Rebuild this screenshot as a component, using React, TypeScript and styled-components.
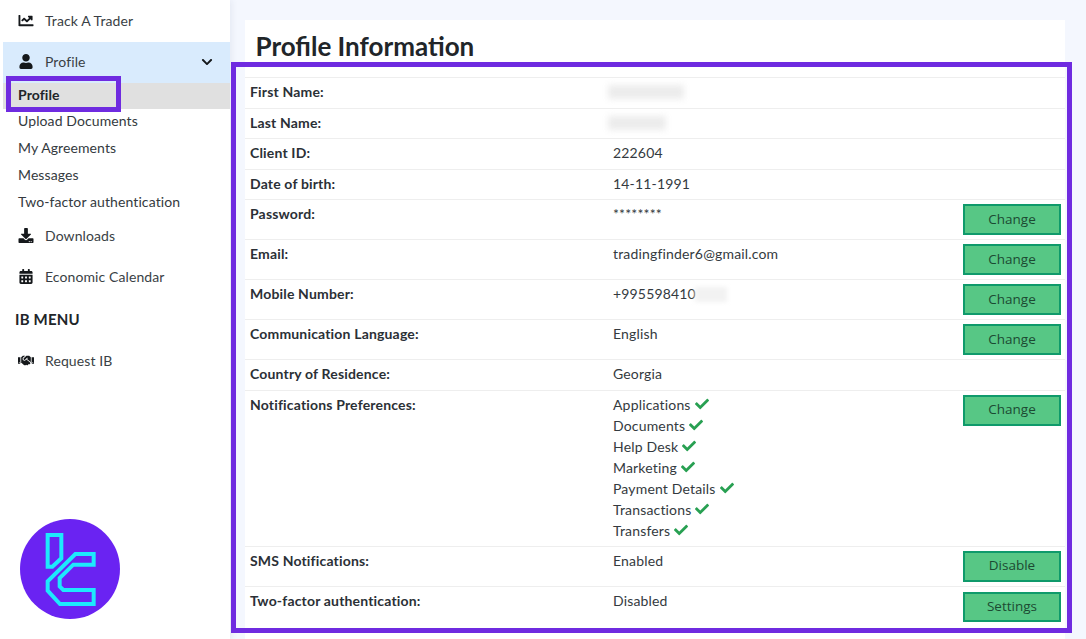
import React from "react";
import styled, { createGlobalStyle } from "styled-components";
import {
  FaCalendarAlt,
  FaChartLine,
  FaCheck,
  FaChevronDown,
  FaDownload,
  FaHandshake,
  FaUser
} from "react-icons/fa";

const GlobalStyle = createGlobalStyle`
  html, body {
    margin: 0;
    height: 100%;
    overflow: hidden;
    background: #f4f7fe;
    font-family: "Lato", "Open Sans", sans-serif;
    font-size: 14px;
    color: #212529;
  }
`;

const subLinks = ["Upload Documents", "My Agreements", "Messages", "Two-factor authentication"];
const notifications = [
  "Applications",
  "Documents",
  "Help Desk",
  "Marketing",
  "Payment Details",
  "Transactions",
  "Transfers"
];

function Logo() {
  return (
    <LogoMark viewBox="58 55 300 300">
      <circle cx="208" cy="205" r="150" fill="#6a23f2" />
      <path d="M141 103H182V173L155 198H141Z" fill="none" stroke="#1de9fd" strokeWidth="12" />
      <path
        d="M279 160H224L141 242V270L178 310H279V268H188L177 257V232L218 192H279Z"
        fill="none"
        stroke="#1de9fd"
        strokeWidth="12"
      />
    </LogoMark>
  );
}

export default function App() {
  return (
    <Page>
      <GlobalStyle />
      <Sidebar>
        <MenuItem>
          <FaChartLine size={15} />
          Track A Trader
        </MenuItem>
        <ActiveItem>
          <FaUser size={15} />
          Profile
          <Chevron>
            <FaChevronDown size={12} />
          </Chevron>
        </ActiveItem>
        <CurrentSubLink>Profile</CurrentSubLink>
        <SubList>
          {subLinks.map(s => (
            <SubLink key={s}>{s}</SubLink>
          ))}
        </SubList>
        <MenuItem>
          <FaDownload size={15} />
          Downloads
        </MenuItem>
        <MenuItem>
          <FaCalendarAlt size={15} />
          Economic Calendar
        </MenuItem>
        <MenuHeading>IB MENU</MenuHeading>
        <MenuItem>
          <FaHandshake size={19} />
          Request IB
        </MenuItem>
        <Logo />
      </Sidebar>
      <Main>
        <Card>
          <Title>Profile Information</Title>
          <Row>
            <Label>First Name:</Label>
            <Value>
              <Redacted $width={76} />
            </Value>
          </Row>
          <Row>
            <Label>Last Name:</Label>
            <Value>
              <Redacted $width={58} />
            </Value>
          </Row>
          <Row>
            <Label>Client ID:</Label>
            <Value>222604</Value>
          </Row>
          <Row>
            <Label>Date of birth:</Label>
            <Value>14-11-1991</Value>
          </Row>
          <Row>
            <Label>Password:</Label>
            <Value>********</Value>
            <ActionButton>Change</ActionButton>
          </Row>
          <Row>
            <Label>Email:</Label>
            <Value>tradingfinder6@gmail.com</Value>
            <ActionButton>Change</ActionButton>
          </Row>
          <Row>
            <Label>Mobile Number:</Label>
            <Value>
              +995598410
              <RedactedTail />
            </Value>
            <ActionButton>Change</ActionButton>
          </Row>
          <Row>
            <Label>Communication Language:</Label>
            <Value>English</Value>
            <ActionButton>Change</ActionButton>
          </Row>
          <Row>
            <Label>Country of Residence:</Label>
            <Value>Georgia</Value>
          </Row>
          <Row>
            <Label>Notifications Preferences:</Label>
            <PrefList>
              {notifications.map(n => (
                <PrefItem key={n}>
                  {n}
                  <FaCheck size={14} />
                </PrefItem>
              ))}
            </PrefList>
            <ActionButton>Change</ActionButton>
          </Row>
          <Row>
            <Label>SMS Notifications:</Label>
            <Value>Enabled</Value>
            <ActionButton>Disable</ActionButton>
          </Row>
          <Row>
            <Label>Two-factor authentication:</Label>
            <Value>Disabled</Value>
            <SettingsButton>Settings</SettingsButton>
          </Row>
        </Card>
      </Main>
      <ProfileHighlight />
      <TableHighlight />
    </Page>
  );
}

const Page = styled.div`
  position: relative;
  display: flex;
  height: 639px;
  overflow: hidden;
`;

const Sidebar = styled.nav`
  flex: 0 0 230px;
  display: flex;
  flex-direction: column;
  background: #fff;
  box-shadow: 2px 0 6px rgba(60, 80, 120, 0.08);
  letter-spacing: 0.1px;
`;

const MenuItem = styled.div`
  display: flex;
  align-items: center;
  height: 41px;
  padding-left: 18px;
  color: #3a3f45;
  svg {
    width: 16px;
    margin-right: 11px;
    color: #15181b;
  }
`;

const ActiveItem = styled(MenuItem)`
  box-sizing: border-box;
  margin: 1px 0 0 3px;
  padding: 0 0 2px 15px;
  background: #d9ebfd;
`;

const Chevron = styled.span`
  display: flex;
  margin-left: auto;
  svg {
    margin-right: 15px;
  }
`;

const SubList = styled.div`
  height: 106px;
`;

const SubLink = styled.div`
  height: 27px;
  line-height: 23px;
  padding-left: 18px;
  color: #343a40;
`;

const CurrentSubLink = styled(SubLink)`
  height: 26px;
  line-height: 24px;
  margin-left: 3px;
  padding-left: 15px;
  font-weight: 700;
  background: #e0e0e0;
  color: #212529;
`;

const MenuHeading = styled.div`
  height: 42px;
  line-height: 42px;
  margin-top: 1px;
  padding-left: 15px;
  font-size: 15px;
  font-weight: 700;
  letter-spacing: 0.2px;
`;

const LogoMark = styled.svg`
  width: 100px;
  height: 100px;
  margin: auto 0 20px 20px;
  flex: none;
`;

const Main = styled.main`
  flex: 1;
  min-width: 0;
  padding: 20px 21px 0 15px;
`;

const Card = styled.section`
  background: #fff;
  height: 619px;
`;

const Title = styled.h1`
  margin: 0;
  height: 57px;
  padding: 10px 0 0 10.5px;
  box-sizing: border-box;
  font-size: 26px;
  line-height: 32px;
  font-weight: 700;
  color: #212529;
`;

const Row = styled.div`
  display: grid;
  grid-template-columns: 368px 1fr 102px;
  box-sizing: border-box;
  padding: 4px 0;
  border-top: 1px solid #eeeeee;
  line-height: 20px;
  letter-spacing: 0.17px;
`;

const Label = styled.div`
  padding: 0 0 1.5px 5px;
  font-weight: 700;
  color: #2b3036;
`;

const Value = styled.div`
  position: relative;
  color: #343a40;
`;

const Redacted = styled.div<{ $width: number }>`
  width: ${p => p.$width}px;
  height: 14px;
  margin: 3px 0 0 -5px;
  background: #ececec;
  filter: blur(3px);
`;

const RedactedTail = styled.span`
  display: inline-block;
  width: 32px;
  height: 15px;
  margin-left: -1px;
  vertical-align: -3px;
  background: #f2f2f2;
  filter: blur(2px);
`;

const PrefList = styled.div`
  margin: -1px 0 1px;
  line-height: 21px;
  color: #343a40;
`;

const PrefItem = styled.div`
  display: flex;
  align-items: center;
  svg {
    margin-left: 4px;
    color: #28a052;
  }
`;

const ActionButton = styled.button`
  box-sizing: border-box;
  width: 98px;
  height: 31px;
  padding: 0 0 2px;
  border: 2px solid #0f9a6b;
  background: #57c785;
  color: #1c4a32;
  font-family: "Open Sans", sans-serif;
  font-size: 13.5px;
`;

const SettingsButton = styled(ActionButton)`
  height: 30px;
  margin-top: 1px;
`;

const ProfileHighlight = styled.div`
  position: absolute;
  left: 6px;
  top: 76px;
  width: 115px;
  height: 36px;
  box-sizing: border-box;
  border: 5px solid #6f2be0;
`;

const TableHighlight = styled.div`
  position: absolute;
  left: 231px;
  top: 62px;
  width: 841px;
  height: 571px;
  box-sizing: border-box;
  border: 5px solid #6f2be0;
`;
